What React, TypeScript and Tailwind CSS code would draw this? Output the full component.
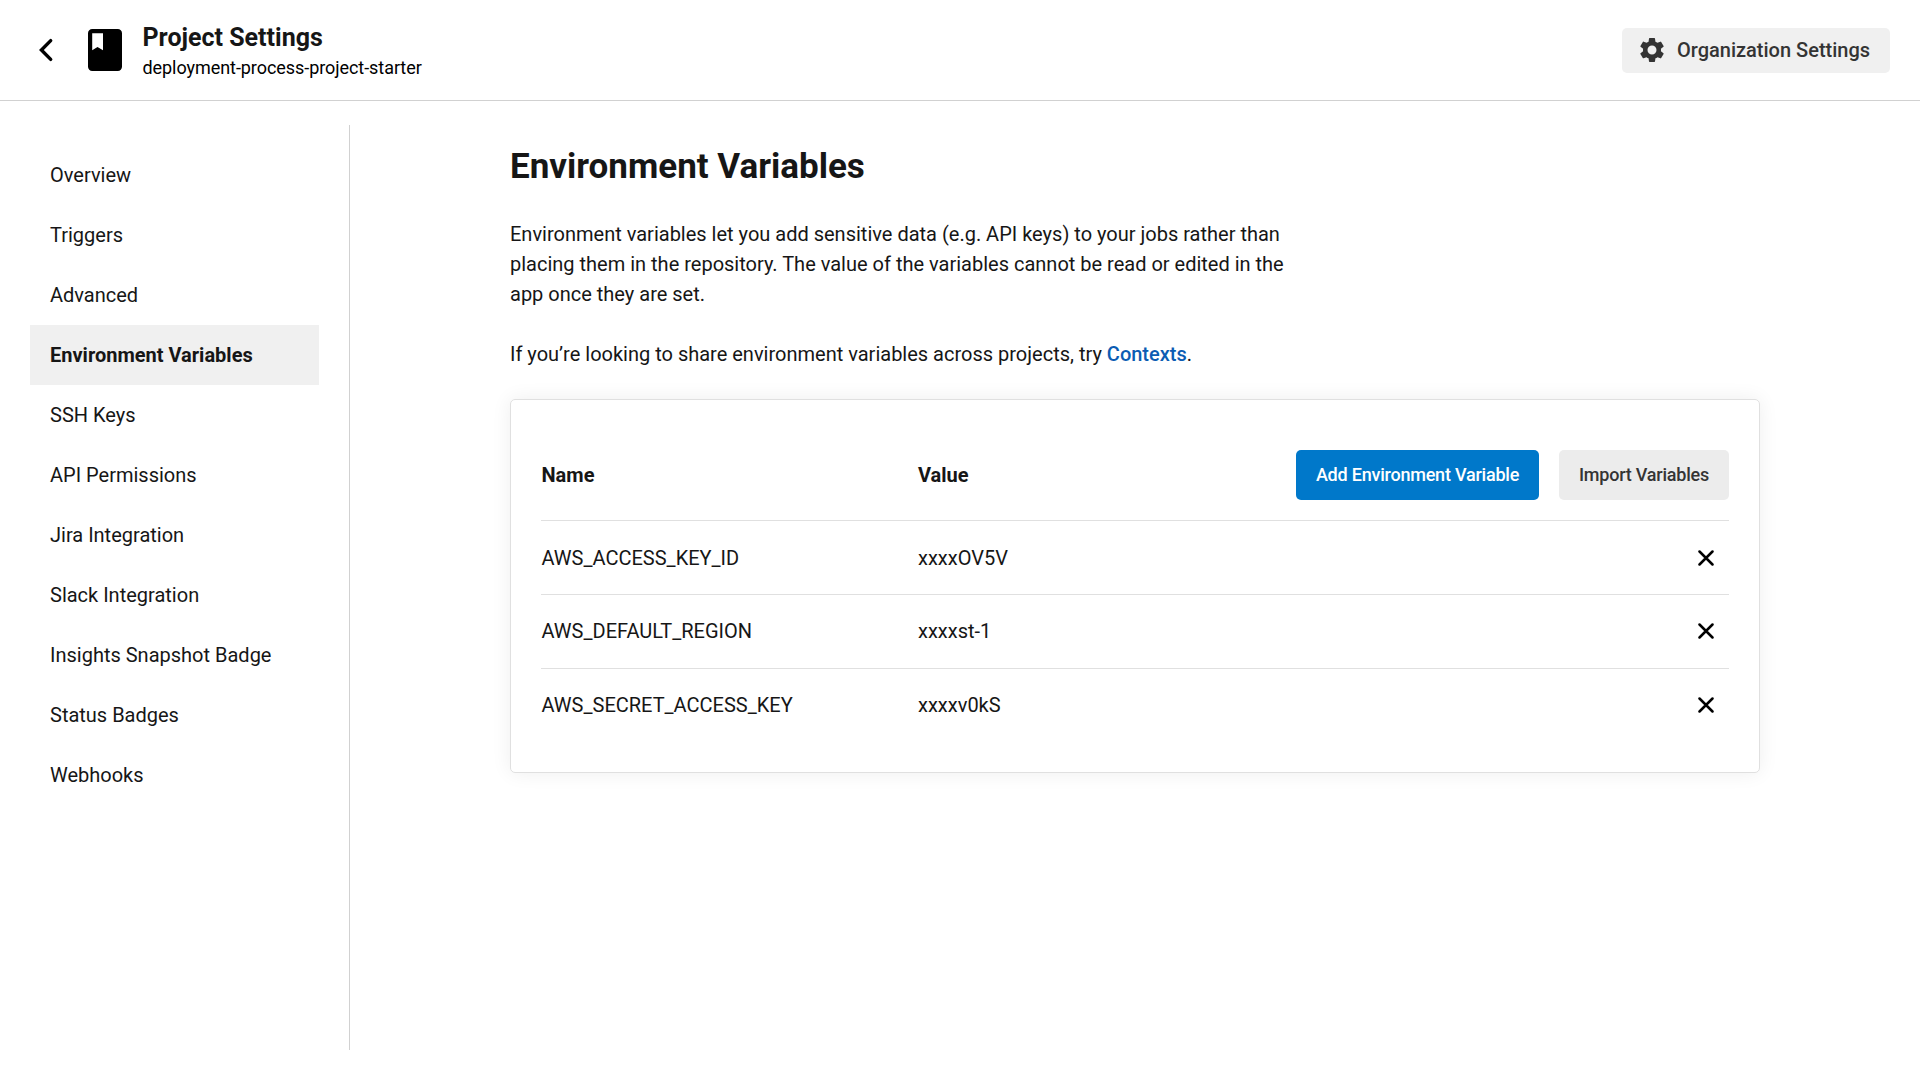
const navItems = [
  'Overview', 'Triggers', 'Advanced', 'Environment Variables', 'SSH Keys', 'API Permissions',
  'Jira Integration', 'Slack Integration', 'Insights Snapshot Badge', 'Status Badges', 'Webhooks',
];

const variables = [
  { name: 'AWS_ACCESS_KEY_ID', value: 'xxxxOV5V' },
  { name: 'AWS_DEFAULT_REGION', value: 'xxxxst-1' },
  { name: 'AWS_SECRET_ACCESS_KEY', value: 'xxxxv0kS' },
];

function Header() {
  return (
    <header className="flex h-[101px] items-center border-b border-[#d1d1d1] pl-[38px] pr-[30px]">
      <button aria-label="Back" className="flex">
        <svg width="16" height="24" viewBox="0 0 16 24" fill="none" stroke="black" strokeWidth="3.4" strokeLinecap="round">
          <path d="M12.700 2.600 3.400 12l9.300 9.400" strokeLinejoin="miter" />
        </svg>
      </button>
      <svg className="ml-[34px]" width="34" height="42" viewBox="0 0 34 42">
        <path fillRule="evenodd" d="M4.2 0h25.6A4.2 4.2 0 0 1 34 4.2v33.6a4.2 4.2 0 0 1-4.2 4.2H4.2A4.2 4.2 0 0 1 0 37.800V4.2A4.2 4.2 0 0 1 4.2 0ZM4.200 4.200V21.200l5.300-3.200L15 21.200V4.200Z" />
      </svg>
      <div className="ml-[20.5px] flex flex-col pt-[5px]">
        <h1 className="text-[25px] font-bold leading-[30px] text-[#161616]">Project Settings</h1>
        <p className="text-[18px] leading-[30px] tracking-[-0.06px] text-black">deployment-process-project-starter</p>
      </div>
      <button className="ml-auto flex h-[45px] w-[268px] items-center rounded-[5px] bg-[#f0f0f0] pl-[15px] text-[20px] font-medium text-[#343434]">
        <svg width="30" height="30" viewBox="0 0 24 24" fill="#343434">
          <path d="M19.140 12.940c.04-.3.06-.61.06-.94 0-.32-.02-.64-.07-.94l2.030-1.580a.49.49 0 0 0 .12-.61l-1.920-3.320a.488.488 0 0 0-.59-.22l-2.390.96c-.5-.38-1.030-.7-1.620-.94l-.36-2.540a.484.484 0 0 0-.48-.41h-3.840c-.24 0-.43.17-.47.41l-.36 2.540c-.59.24-1.130.57-1.620.94l-2.390-.96c-.22-.08-.47 0-.59.22L2.740 8.870c-.12.21-.08.47.12.61l2.030 1.580c-.05.3-.09.63-.09.94s.02.64.07.94l-2.030 1.580a.49.49 0 0 0-.12.61l1.920 3.320c.12.22.37.29.59.22l2.390-.96c.5.38 1.030.7 1.620.94l.36 2.540c.05.24.24.41.48.41h3.840c.24 0 .44-.17.47-.41l.36-2.540c.59-.24 1.130-.56 1.620-.94l2.390.96c.22.08.47 0 .59-.22l1.920-3.320c.12-.22.07-.47-.12-.61l-2.010-1.580zM12 15.600A3.600 3.600 0 1 1 12 8.400a3.600 3.600 0 0 1 0 7.200z" />
        </svg>
        <span className="ml-2.5">Organization Settings</span>
      </button>
    </header>
  );
}

function Sidebar() {
  return (
    <nav className="mt-6 h-[925px] w-[350px] shrink-0 border-r border-[#d1d1d1] pl-[30px] pt-5">
      {navItems.map((item) => (
        <a
          key={item}
          className={
            item === 'Environment Variables'
              ? 'flex h-[60px] w-[289px] items-center bg-[#f0f0f0] pl-5 font-bold'
              : 'flex h-[60px] w-[289px] items-center pl-5'
          }
        >
          {item}
        </a>
      ))}
    </nav>
  );
}

function CloseIcon() {
  return (
    <svg width="16" height="16" viewBox="0 0 16 16" stroke="black" strokeWidth="2.5" strokeLinecap="round">
      <path d="m1.500 1.500 13 13m0-13-13 13" />
    </svg>
  );
}

function VariablesCard() {
  return (
    <section className="mt-[30px] h-[374px] w-[1250px] rounded-[5px] border border-[#e0e0e0] px-[30px] pt-[50px] shadow-[0_0_20px_rgba(0,0,0,0.07)]">
      <div className="flex h-[70.3px] items-start">
        <div className="flex h-[50px] w-[377px] items-center pl-[0.5px] font-bold">Name</div>
        <div className="flex h-[50px] items-center font-bold">Value</div>
        <div className="ml-auto flex gap-5 text-[18px] font-medium tracking-[-0.22px]">
          <button className="h-[50px] w-[243px] whitespace-nowrap rounded-[5px] bg-[#0078ca] text-white">Add Environment Variable</button>
          <button className="h-[50px] w-[170px] rounded-[5px] bg-[#ececec] text-[#343434]">Import Variables</button>
        </div>
      </div>
      {variables.map((v) => (
        <div key={v.name} className="flex h-[73.7px] items-center border-t border-[#e0e0e0]">
          <div className="w-[377px] pl-[0.5px]">{v.name}</div>
          <div>{v.value}</div>
          <button aria-label="Remove variable" className="ml-auto mr-[15px]">
            <CloseIcon />
          </button>
        </div>
      ))}
    </section>
  );
}

export default function App() {
  return (
    <div className="h-[1080px] w-[1920px] overflow-hidden bg-white font-['Roboto',sans-serif] text-[20px] leading-[30px] text-[#161616]">
      <Header />
      <div className="flex">
        <Sidebar />
        <main className="pl-40 pt-11">
          <h2 className="text-[35px] font-bold leading-[44px]">Environment Variables</h2>
          <p className="mt-[30px] w-[790px]">
            Environment variables let you add sensitive data (e.g. API keys) to your jobs rather than
            <br />
            placing them in the repository. The value of the variables cannot be read or edited in the
            <br />
            app once they are set.
          </p>
          <p className="mt-[30px]">
            If you’re looking to share environment variables across projects, try{' '}
            <a className="font-medium text-[#0b5cb3]">Contexts</a>.
          </p>
          <VariablesCard />
        </main>
      </div>
    </div>
  );
}
